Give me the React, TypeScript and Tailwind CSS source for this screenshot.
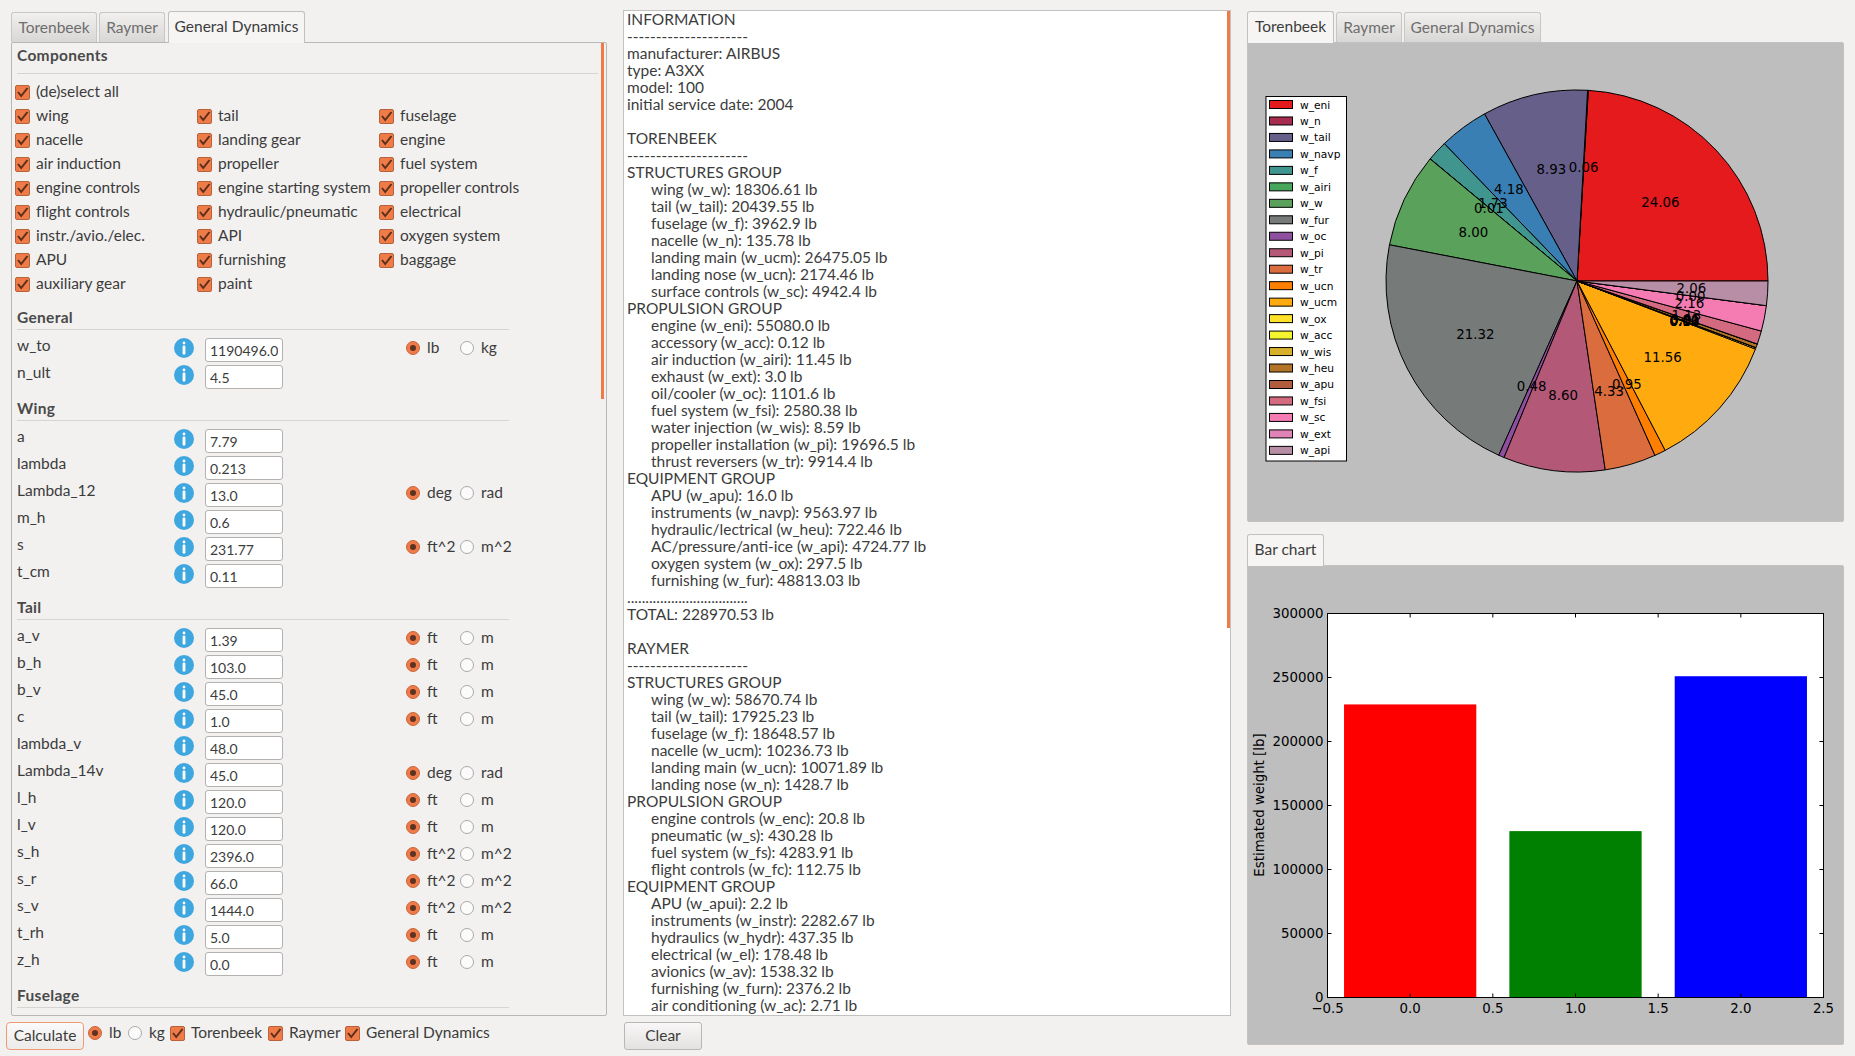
const components = [
  ['wing', 'tail', 'fuselage'],
  ['nacelle', 'landing gear', 'engine'],
  ['air induction', 'propeller', 'fuel system'],
  ['engine controls', 'engine starting system', 'propeller controls'],
  ['flight controls', 'hydraulic/pneumatic', 'electrical'],
  ['instr./avio./elec.', 'API', 'oxygen system'],
  ['APU', 'furnishing', 'baggage'],
  ['auxiliary gear', 'paint'],
];

type Field = [string, string, string?, string?];

const sections: { title: string; fields: Field[] }[] = [
  {
    title: 'General',
    fields: [
      ['w_to', '1190496.0', 'lb', 'kg'],
      ['n_ult', '4.5'],
    ],
  },
  {
    title: 'Wing',
    fields: [
      ['a', '7.79'],
      ['lambda', '0.213'],
      ['Lambda_12', '13.0', 'deg', 'rad'],
      ['m_h', '0.6'],
      ['s', '231.77', 'ft^2', 'm^2'],
      ['t_cm', '0.11'],
    ],
  },
  {
    title: 'Tail',
    fields: [
      ['a_v', '1.39', 'ft', 'm'],
      ['b_h', '103.0', 'ft', 'm'],
      ['b_v', '45.0', 'ft', 'm'],
      ['c', '1.0', 'ft', 'm'],
      ['lambda_v', '48.0'],
      ['Lambda_14v', '45.0', 'deg', 'rad'],
      ['l_h', '120.0', 'ft', 'm'],
      ['l_v', '120.0', 'ft', 'm'],
      ['s_h', '2396.0', 'ft^2', 'm^2'],
      ['s_r', '66.0', 'ft^2', 'm^2'],
      ['s_v', '1444.0', 'ft^2', 'm^2'],
      ['t_rh', '5.0', 'ft', 'm'],
      ['z_h', '0.0', 'ft', 'm'],
    ],
  },
];

// '>' marks an indented line
const report = [
  'INFORMATION',
  '---------------------',
  'manufacturer: AIRBUS',
  'type: A3XX',
  'model: 100',
  'initial service date: 2004',
  '',
  'TORENBEEK',
  '---------------------',
  'STRUCTURES GROUP',
  '>wing (w_w): 18306.61 lb',
  '>tail (w_tail): 20439.55 lb',
  '>fuselage (w_f): 3962.9 lb',
  '>nacelle (w_n): 135.78 lb',
  '>landing main (w_ucm): 26475.05 lb',
  '>landing nose (w_ucn): 2174.46 lb',
  '>surface controls (w_sc): 4942.4 lb',
  'PROPULSION GROUP',
  '>engine (w_eni): 55080.0 lb',
  '>accessory (w_acc): 0.12 lb',
  '>air induction (w_airi): 11.45 lb',
  '>exhaust (w_ext): 3.0 lb',
  '>oil/cooler (w_oc): 1101.6 lb',
  '>fuel system (w_fsi): 2580.38 lb',
  '>water injection (w_wis): 8.59 lb',
  '>propeller installation (w_pi): 19696.5 lb',
  '>thrust reversers (w_tr): 9914.4 lb',
  'EQUIPMENT GROUP',
  '>APU (w_apu): 16.0 lb',
  '>instruments (w_navp): 9563.97 lb',
  '>hydraulic/lectrical (w_heu): 722.46 lb',
  '>AC/pressure/anti-ice (w_api): 4724.77 lb',
  '>oxygen system (w_ox): 297.5 lb',
  '>furnishing (w_fur): 48813.03 lb',
  '.................................',
  'TOTAL: 228970.53 lb',
  '',
  'RAYMER',
  '---------------------',
  'STRUCTURES GROUP',
  '>wing (w_w): 58670.74 lb',
  '>tail (w_tail): 17925.23 lb',
  '>fuselage (w_f): 18648.57 lb',
  '>nacelle (w_ucm): 10236.73 lb',
  '>landing main (w_ucn): 10071.89 lb',
  '>landing nose (w_n): 1428.7 lb',
  'PROPULSION GROUP',
  '>engine controls (w_enc): 20.8 lb',
  '>pneumatic (w_s): 430.28 lb',
  '>fuel system (w_fs): 4283.91 lb',
  '>flight controls (w_fc): 112.75 lb',
  'EQUIPMENT GROUP',
  '>APU (w_apui): 2.2 lb',
  '>instruments (w_instr): 2282.67 lb',
  '>hydraulics (w_hydr): 437.35 lb',
  '>electrical (w_el): 178.48 lb',
  '>avionics (w_av): 1538.32 lb',
  '>furnishing (w_furn): 2376.2 lb',
  '>air conditioning (w_ac): 2.71 lb',
];

const wedges: [string, number, string, string][] = [
  ['w_eni', 24.06, '#e41a1c', '24.06'],
  ['w_n', 0.06, '#a72b4f', '0.06'],
  ['w_tail', 8.93, '#665f8a', '8.93'],
  ['w_navp', 4.18, '#3a7fb3', '4.18'],
  ['w_f', 1.73, '#40958f', '1.73'],
  ['w_airi', 0.01, '#47a75b', '0.01'],
  ['w_w', 8.0, '#5aa15c', '8.00'],
  ['w_fur', 21.32, '#767a78', '21.32'],
  ['w_oc', 0.48, '#8e4f9f', '0.48'],
  ['w_pi', 8.6, '#b45878', '8.60'],
  ['w_tr', 4.33, '#db6c3d', '4.33'],
  ['w_ucn', 0.95, '#ff7f00', '0.95'],
  ['w_ucm', 11.56, '#ffab10', '11.56'],
  ['w_ox', 0.13, '#ffe12a', '0.13'],
  ['w_acc', 0.0, '#f5f52f', '0.00'],
  ['w_wis', 0.0, '#d8b02c', '0.00'],
  ['w_heu', 0.31, '#b37428', '0.31'],
  ['w_apu', 0.01, '#b25c3e', '0.01'],
  ['w_fsi', 1.13, '#d46a7f', '1.13'],
  ['w_sc', 2.16, '#f47cb2', '2.16'],
  ['w_ext', 0.0, '#e083b7', '0.00'],
  ['w_api', 2.06, '#b88ea6', '2.06'],
];

function Checkbox() {
  return (
    <svg width="15" height="15" viewBox="0 0 15 15" className="shrink-0">
      <rect x="0.5" y="0.5" width="14" height="14" rx="1.5" fill="#ef7b48" stroke="#b9623a" />
      <path d="M3 7l3.2 4L12.5 3" fill="none" stroke="#5a2f1c" strokeWidth="2" />
    </svg>
  );
}

function Radio({ on }: { on?: boolean }) {
  return (
    <svg width="14" height="14" viewBox="0 0 14 14" className="shrink-0">
      {on ? (
        <>
          <circle cx="7" cy="7" r="6.5" fill="#ef7b48" stroke="#c8663c" />
          <circle cx="7" cy="7" r="3" fill="#5f3322" />
        </>
      ) : (
        <circle cx="7" cy="7" r="6.5" fill="#fbfbfb" stroke="#a9a9a9" />
      )}
    </svg>
  );
}

function InfoIcon() {
  return (
    <svg width="20" height="20" viewBox="0 0 20 20" className="shrink-0">
      <circle cx="10" cy="10" r="10" fill="#3fa7e0" />
      <rect x="8.6" y="3.6" width="2.8" height="2.8" rx="1.4" fill="#fff" />
      <rect x="8.6" y="7.6" width="2.8" height="9" rx="1.2" fill="#fff" />
    </svg>
  );
}

function Tab({ label, width, active }: { label: string; width: string; active?: boolean }) {
  return (
    <div
      className={
        active
          ? `${width} h-[32px] -mb-px z-10 flex items-center justify-center rounded-t-[3px] border border-b-0 border-[#c2c0be] bg-[#f6f5f4] text-[#3c3c3c] pb-[1px]`
          : `${width} h-[30px] flex items-center justify-center rounded-t-[3px] border border-b-0 border-[#c9c7c5] bg-gradient-to-b from-[#f1f0ef] to-[#d9d7d5] text-[#6e6e6e]`
      }
    >
      {label}
    </div>
  );
}

function SectionHeader({ title }: { title: string }) {
  return (
    <div className="mt-[9px] mr-[91px] mb-[8px] border-b border-[#d6d4d2] h-[23px]">
      <div className="font-bold text-[#4a4a4a] text-[15.5px] leading-[20px] tracking-[0.3px]">{title}</div>
    </div>
  );
}

function FieldRow({ field }: { field: Field }) {
  const [name, value, unitA, unitB] = field;
  return (
    <div className="flex h-[24px] mb-[3px]">
      <div className="w-[157px] -mt-[1px] leading-[16px] text-[#3c3c3c]">{name}</div>
      <div className="w-[31px]">
        <InfoIcon />
      </div>
      <input
        readOnly
        value={value}
        className="w-[78px] h-[24px] px-[4px] rounded-[3px] border border-[#b4b2b0] bg-white text-[14px] text-[#3c3c3c] outline-none"
      />
      {unitA && (
        <div className="flex items-start pl-[123px] text-[#3c3c3c]">
          <div className="flex w-[54px] items-center gap-[7px] h-[20px]">
            <Radio on />
            <span>{unitA}</span>
          </div>
          <div className="flex items-center gap-[7px] h-[20px]">
            <Radio />
            <span>{unitB}</span>
          </div>
        </div>
      )}
    </div>
  );
}

function FormPanel() {
  return (
    <div className="flex h-[974px] rounded-[2px] border border-[#b9b7b5] overflow-hidden">
      <div className="flex-1 min-w-0 pl-[5px] pr-0">
        <div className="h-[31px] mr-[2px] border-b border-[#d6d4d2]">
          <div className="font-bold text-[#4a4a4a] text-[15.5px] leading-[25px] tracking-[0.3px]">Components</div>
        </div>
        <div className="-ml-[2px] pt-[6px]">
          <div className="flex items-center gap-[6px] h-[24px] text-[#3c3c3c]">
            <Checkbox />
            <span>(de)select all</span>
          </div>
          {components.map((row) => (
            <div key={row[0]} className="grid grid-cols-[182px_182px_182px] h-[24px] text-[#3c3c3c]">
              {row.map((name) => (
                <div key={name} className="flex items-center gap-[6px] whitespace-nowrap">
                  <Checkbox />
                  <span>{name}</span>
                </div>
              ))}
            </div>
          ))}
        </div>
        <div className="h-[2px]" />
        {sections.map((s) => (
          <div key={s.title}>
            <SectionHeader title={s.title} />
            {s.fields.map((f) => (
              <FieldRow key={f[0]} field={f} />
            ))}
          </div>
        ))}
        <SectionHeader title="Fuselage" />
      </div>
      <div className="w-[6px] shrink-0">
        <div className="ml-[1px] w-[3px] h-[356px] bg-[#ef7b48]" />
      </div>
    </div>
  );
}

function PieChart() {
  const cx = 1577;
  const cy = 281;
  const r = 191;
  const total = wedges.reduce((sum, w) => sum + w[1], 0);
  let acc = 0;
  const parts = wedges.map(([name, v, color, label]) => {
    const a0 = (acc / total) * Math.PI * 2;
    acc += v;
    const a1 = (acc / total) * Math.PI * 2;
    const mid = (a0 + a1) / 2;
    const d = `M${cx} ${cy}L${cx + r * Math.cos(a0)} ${cy - r * Math.sin(a0)}A${r} ${r} 0 ${a1 - a0 > Math.PI ? 1 : 0} 0 ${cx + r * Math.cos(a1)} ${cy - r * Math.sin(a1)}Z`;
    return { name, color, label, d, lx: cx + 0.6 * r * Math.cos(mid), ly: cy - 0.6 * r * Math.sin(mid) };
  });
  return (
    <svg width="595" height="478" viewBox="1248 43 595 478" className="block" fontFamily="'DejaVu Sans', sans-serif">
      {parts.map((p) => (
        <path key={p.name} d={p.d} fill={p.color} stroke="#000" strokeWidth="1" />
      ))}
      {parts.map((p) => (
        <text key={p.name} x={p.lx} y={p.ly + 5} fontSize="13.33" textAnchor="middle" fill="#000">
          {p.label}
        </text>
      ))}
      <rect x="1266" y="96.5" width="80.5" height="364.5" fill="#fff" stroke="#000" />
      {parts.map((p, i) => (
        <g key={p.name}>
          <rect x="1269.5" y={100.5 + i * 16.47} width="23" height="8" fill={p.color} stroke="#000" />
          <text x="1300" y={108.5 + i * 16.47} fontSize="10.67" fill="#000">
            {p.name}
          </text>
        </g>
      ))}
    </svg>
  );
}

function BarChart() {
  const left = 1327.5;
  const right = 1823.5;
  const top = 613.5;
  const bottom = 997.5;
  const px = (v: number) => left + ((v + 0.5) / 3) * (right - left);
  const py = (v: number) => bottom - (v / 300000) * (bottom - top);
  const bars: [number, number, string][] = [
    [0, 228970, '#ff0000'],
    [1, 130000, '#008000'],
    [2, 251000, '#0000ff'],
  ];
  const xTicks = [-0.5, 0, 0.5, 1, 1.5, 2, 2.5];
  const yTicks = [0, 50000, 100000, 150000, 200000, 250000, 300000];
  return (
    <svg width="595" height="478" viewBox="1248 566 595 478" className="block" fontFamily="'DejaVu Sans', sans-serif">
      <rect x={left} y={top} width={right - left} height={bottom - top} fill="#fff" />
      {bars.map(([c, h, color]) => (
        <rect key={c} x={px(c - 0.4)} y={py(h)} width={px(c + 0.4) - px(c - 0.4)} height={bottom - py(h)} fill={color} />
      ))}
      <rect x={left} y={top} width={right - left} height={bottom - top} fill="none" stroke="#000" />
      {xTicks.map((t) => (
        <g key={t}>
          <path d={`M${px(t)} ${top}v4M${px(t)} ${bottom}v-4`} stroke="#000" />
          <text x={px(t)} y={bottom + 15} fontSize="13.33" textAnchor="middle" fill="#000">
            {t.toFixed(1).replace('-', '\u2212')}
          </text>
        </g>
      ))}
      {yTicks.map((t) => (
        <g key={t}>
          <path d={`M${left} ${py(t)}h4M${right} ${py(t)}h-4`} stroke="#000" />
          <text x={left - 4} y={py(t) + 4} fontSize="13.33" textAnchor="end" fill="#000">
            {t}
          </text>
        </g>
      ))}
      <text transform="translate(1264 805) rotate(-90)" fontSize="13.33" textAnchor="middle" fill="#000">
        Estimated weight [lb]
      </text>
    </svg>
  );
}

export default function App() {
  return (
    <div className="flex w-[1855px] h-[1056px] pt-[10px] overflow-hidden bg-[#f2f1f0] text-[15.5px] font-['Lato',sans-serif]">
      {/* Left column - inputs */}
      <div className="ml-[11px] w-[596px] shrink-0">
        <div className="flex items-end gap-[2px] h-[32px]">
          <Tab label="Torenbeek" width="w-[86px]" />
          <Tab label="Raymer" width="w-[66px] mr-[1px]" />
          <Tab label="General Dynamics" width="w-[137px]" active />
        </div>
        <FormPanel />
        <div className="flex items-start mt-[6px] -ml-[5px] h-[28px] text-[#3c3c3c] whitespace-nowrap">
          <button className="w-[78px] h-[28px] rounded-[4px] border border-[#ef9a74] bg-gradient-to-b from-[#fbfafa] to-[#ecebe9] text-[#3c3c3c]">
            Calculate
          </button>
          <div className="flex items-center gap-[7px] ml-[4px] w-[40px] h-[22px]">
            <Radio on />
            <span>lb</span>
          </div>
          <div className="flex items-center gap-[7px] w-[42px] h-[22px]">
            <Radio />
            <span>kg</span>
          </div>
          <div className="flex items-center gap-[6px] w-[98px] h-[22px]">
            <Checkbox />
            <span>Torenbeek</span>
          </div>
          <div className="flex items-center gap-[6px] w-[77px] h-[22px]">
            <Checkbox />
            <span>Raymer</span>
          </div>
          <div className="flex items-center gap-[6px] h-[22px]">
            <Checkbox />
            <span>General Dynamics</span>
          </div>
        </div>
      </div>

      {/* Middle column - report */}
      <div className="ml-[16px] w-[608px] shrink-0">
        <div className="flex h-[1006px] border border-[#c4c2c0] bg-white overflow-hidden">
          <div className="flex-1 min-w-0 pl-[3px] text-[#3c3c3c] leading-[17px] whitespace-pre">
            {report.map((line, i) =>
              line.startsWith('>') ? (
                <div key={i} className="pl-[24px] h-[17px]">
                  {line.slice(1)}
                </div>
              ) : (
                <div key={i} className="h-[17px]">
                  {line}
                </div>
              )
            )}
          </div>
          <div className="w-[3px] shrink-0">
            <div className="w-[3px] h-[617px] bg-[#ef7b48]" />
          </div>
        </div>
        <button className="block mt-[6px] ml-[1px] w-[78px] h-[28px] rounded-[3px] border border-[#b9b7b5] bg-gradient-to-b from-[#f8f7f7] to-[#e4e2e0] text-[#3c3c3c]">
          Clear
        </button>
      </div>

      {/* Right column - charts */}
      <div className="ml-[16px] w-[597px] shrink-0">
        <div className="flex items-end gap-[2px] h-[32px]">
          <Tab label="Torenbeek" width="w-[87px]" active />
          <Tab label="Raymer" width="w-[66px]" />
          <Tab label="General Dynamics" width="w-[137px]" />
        </div>
        <div className="h-[480px] rounded-[2px] border border-[#c4c2c0] bg-[#bebebe] overflow-hidden">
          <PieChart />
        </div>
        <div className="flex items-end h-[32px] mt-[11px]">
          <Tab label="Bar chart" width="w-[77px]" active />
        </div>
        <div className="h-[480px] rounded-[2px] border border-[#c4c2c0] bg-[#bebebe] overflow-hidden">
          <BarChart />
        </div>
      </div>
    </div>
  );
}
